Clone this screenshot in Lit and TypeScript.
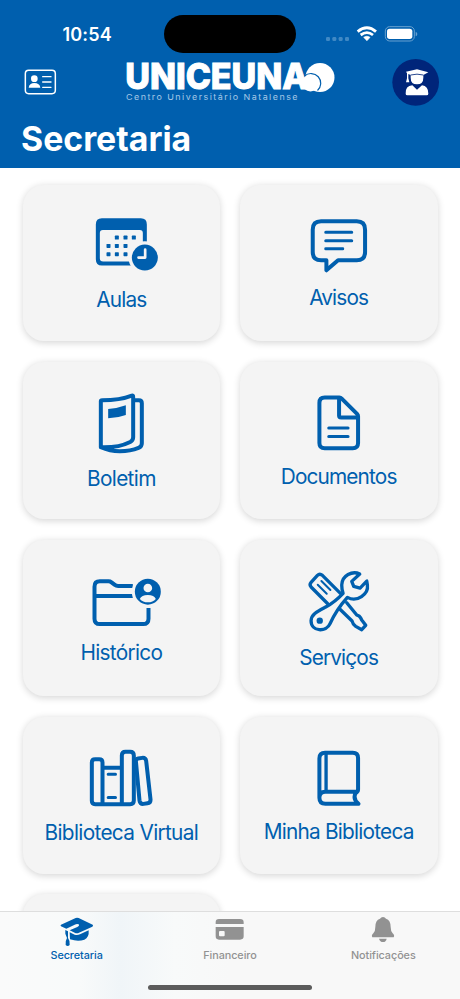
import { LitElement, html, svg, css, nothing } from "lit";
import { customElement, property } from "lit/decorators.js";

const BLUE = "#005fae";

const icons: Record<string, unknown> = {
  aulas: svg`
    <path fill-rule="evenodd" fill="${BLUE}" d="M276 128H393Q411 128 411 147V270H276Q258 270 258 251V147Q258 128 276 128ZM279 163Q270 163 270 172V248Q270 258 280 258H399V172Q399 163 390 163Z"/>
    <g fill="${BLUE}">
      <rect x="315" y="180" width="12" height="12" rx="2"/><rect x="341" y="180" width="12" height="12" rx="2"/><rect x="366" y="180" width="12" height="12" rx="2"/>
      <rect x="290" y="205" width="12" height="12" rx="2"/><rect x="315" y="205" width="12" height="12" rx="2"/><rect x="341" y="205" width="12" height="12" rx="2"/>
      <rect x="290" y="230" width="12" height="12" rx="2"/><rect x="315" y="230" width="12" height="12" rx="2"/><rect x="341" y="230" width="12" height="12" rx="2"/>
    </g>
    <circle cx="405" cy="246" r="49" fill="#f4f4f4"/>
    <circle cx="405" cy="246" r="39" fill="${BLUE}"/>
    <path d="M406 222V246H386" fill="none" stroke="#f4f4f4" stroke-width="8" stroke-linecap="round" stroke-linejoin="round"/>`,
  avisos: svg`
    <g fill="none" stroke="${BLUE}" stroke-linecap="round" stroke-linejoin="round">
      <path stroke-width="12" d="M272 138H379Q404 138 404 163V230Q404 255 379 255H323L288 285V255H272Q247 255 247 230V163Q247 138 272 138Z"/>
      <path stroke-width="9" d="M286 171H364M286 196H364M286 220H337"/>
    </g>`,
  boletim: svg`
    <g fill="none" stroke="${BLUE}" stroke-width="12" stroke-linecap="round" stroke-linejoin="round">
      <path d="M273 275V137Q273 134 277 134Q330 134 366 120Q370 119 370 124V245Q370 254 361 259Q325 277 273 275Q300 287 330 287Q362 287 386 277Q396 273 396 263V143Q396 134 387 134H374"/>
    </g>
    <path d="M295 160Q324 158 348 149V178Q324 187 295 188Z" fill="${BLUE}"/>`,
  documentos: svg`
    <g fill="none" stroke="${BLUE}" stroke-linecap="round" stroke-linejoin="round">
      <path stroke-width="12" d="M283 128H327Q331 128 334 131L380 177Q383 180 383 184V264Q383 280 367 280H283Q267 280 267 264V144Q267 128 283 128ZM326 129V182Q326 188 332 188H382"/>
      <path stroke-width="9" d="M295 219H353M295 245H353"/>
    </g>`,
  historico: svg`
    <g fill="none" stroke="${BLUE}" stroke-width="12">
      <path d="M369 168H325Q319 168 314 164L305 157Q301 154 296 154H270Q254 154 254 170V266Q254 282 270 282H400Q416 282 416 266V234M254 198H369"/>
    </g>
    <circle cx="414" cy="185" r="48" fill="#f4f4f4"/>
    <circle cx="414" cy="185" r="39" fill="${BLUE}"/>
    <circle cx="414" cy="174" r="13" fill="#f4f4f4"/>
    <path d="M390 207Q395 195 414 195Q433 195 438 207Q429 217 414 217Q399 217 390 207Z" fill="#f4f4f4"/>`,
  servicos: svg`
    <g fill="none" stroke="${BLUE}" stroke-width="10" stroke-linejoin="round" stroke-linecap="round">
      <path d="M292 219L242 169Q236 162 242 155L261 134Q268 127 276 134L330 188"/>
      <path stroke-width="6" d="M273 151L300 178M262 162L289 189"/>
      <path d="M349 216L379 253L386 256Q391 261 394 268L406 284L394 297L376 287Q367 281 365 271L328 235"/>
      <path d="M388 130C366 119 335 134 334 163Q334 176 338 188C324 203 306 218 286 229C260 243 243 251 242 270C242 304 288 305 299 279C310 254 324 230 351 200C380 216 415 190 411 163L409 151L389 172L370 167L364 152Z"/>
    </g>
    <circle cx="268" cy="270" r="9.500" fill="${BLUE}"/>`,
  virtual: svg`
    <g fill="none" stroke="${BLUE}" stroke-width="12" stroke-linejoin="round">
      <path d="M278 282H256Q246 282 246 272V157Q246 147 256 147H268Q278 147 278 157V282ZM278 173H336M278 282H336M336 282V136Q336 125 347 125H361Q372 125 372 136V271Q372 282 361 282Z"/>
      <path d="M378 151Q379 146 385 145L397 143Q407 142 409 152L422 267Q423 278 413 279L401 281Q391 282 389 271Z"/>
      <path stroke-width="9" stroke-linecap="round" d="M295 192H317M295 262H317"/>
    </g>`,
  minha: svg`
    <g fill="none" stroke="${BLUE}" stroke-width="12" stroke-linejoin="round" stroke-linecap="round">
      <path d="M267 262V145Q267 128 284 128H367Q383 128 383 144V238Q383 245 376 248Q366 265 384 281H285Q267 281 267 263Q267 245 285 245H376"/>
      <path stroke-width="10" stroke-linecap="butt" d="M287 130V244"/>
    </g>`,
};

interface Tile { icon: string; label: string; box: string; h: number; ls: number; }

const tiles: Tile[] = [
  { icon: "aulas", label: "Aulas", box: "213.5 115.2 240 219", h: 73, ls: -0.85 },
  { icon: "avisos", label: "Avisos", box: "205.8 119.1 240 211.2", h: 70.4, ls: -0.85 },
  { icon: "boletim", label: "Boletim", box: "213.5 100.2 240 233.4", h: 77.8, ls: -0.65 },
  { icon: "documentos", label: "Documentos", box: "205.8 108.3 240 217.2", h: 72.4, ls: -0.85 },
  { icon: "historico", label: "Histórico", box: "213.5 120 240 208.2", h: 69.4, ls: -0.7 },
  { icon: "servicos", label: "Serviços", box: "205.8 102.9 240 242.4", h: 80.8, ls: -0.85 },
  { icon: "virtual", label: "Biblioteca Virtual", box: "213.5 104.4 240 223.8", h: 74.6, ls: -0.67 },
  { icon: "minha", label: "Minha Biblioteca", box: "205.8 107.4 240 217.8", h: 72.6, ls: -0.77 },
];

@customElement("menu-tile")
class MenuTile extends LitElement {
  @property({ attribute: false }) tile?: Tile;
  static styles = css`
    :host { display: flex; flex-direction: column; align-items: center; justify-content: center;
      height: 156.6px; border-radius: 21px; background: #f4f4f4; box-shadow: 0 1.5px 7px rgba(0,0,0,.16); color: #005fae; }
    svg { display: block; flex: none; }
    .label { height: 26px; line-height: 26px; font-size: 20.8px; font-weight: 400; white-space: nowrap; }
  `;
  render() {
    const t = this.tile;
    if (!t) return nothing;
    return html`<svg width="80" height="${t.h}" viewBox="${t.box}">${icons[t.icon]}</svg>
      <div class="label" style="letter-spacing:${t.ls}px">${t.label}</div>`;
  }
}

@customElement("app-header")
class AppHeader extends LitElement {
  static styles = css`
    :host { display: block; flex: none; height: 168px; background: #005fae; color: #fff; }
    svg { display: block; }
    .status { display: grid; grid-template-columns: 164px 132px 164px; height: 54px; padding-top: 15px; box-sizing: border-box; }
    .time { padding-left: 62.5px; line-height: 39px; font-size: 18px; font-weight: 600; letter-spacing: .15px; }
    .island { height: 38px; border-radius: 19px; background: #000; }
    .signals { padding-left: 30px; padding-top: 9px; }
    .nav { display: flex; align-items: center; justify-content: space-between; height: 56px; padding: 0 21px 0 24px; }
    .logo { margin-left: 10px; overflow: visible; }
    h1 { margin: 8px 0 0 21px; font-size: 33.8px; line-height: 42px; font-weight: 700; letter-spacing: 0; }
  `;
  render() {
    return html`
      <div class="status">
        <div class="time">10:54</div>
        <div class="island"></div>
        <div class="signals">
          <svg width="94" height="20" viewBox="288 72 282 60">
            <g fill="#4089c5"><rect x="288" y="111" width="12" height="12" rx="4"/><rect x="307" y="111" width="12" height="12" rx="4"/><rect x="326" y="111" width="12" height="12" rx="4"/><rect x="345" y="111" width="12" height="12" rx="4"/></g>
            <g fill="none" stroke="#fff" stroke-width="8.500"><path d="M383 95Q411 72 438 95"/><path d="M392 105Q411 91 429 105"/></g>
            <path d="M401 112Q411 105 420 112L411 122Z" fill="#fff" stroke="#fff" stroke-width="2" stroke-linejoin="round"/>
            <rect x="466" y="80" width="87" height="43" rx="13" fill="none" stroke="#67a0d0" stroke-width="3"/>
            <path d="M557 95Q562 97 562 102Q562 107 557 109Z" fill="#67a0d0"/>
            <rect x="471" y="86" width="76" height="31" rx="8" fill="#fff"/>
          </svg>
        </div>
      </div>
      <div class="nav">
        <svg width="33" height="26" viewBox="72 208 99 78">
          <rect x="76" y="212" width="90" height="70" rx="10" fill="none" stroke="#fff" stroke-width="4.500"/>
          <circle cx="103" cy="237" r="10" fill="#fff"/>
          <path d="M86 264Q88 250 103 250Q119 250 121 264Z" fill="#fff"/>
          <path d="M128 231H153M128 247H153M128 263H153" stroke="#fff" stroke-width="4" stroke-linecap="round"/>
        </svg>
        <svg class="logo" width="210" height="54" viewBox="125 55 210 54">
          <text x="125.300" y="89" textLength="183" lengthAdjust="spacingAndGlyphs" font-size="35.400" font-weight="800" fill="#fff" stroke="#fff" stroke-width="1">UNICEUNA</text>
          <circle cx="320" cy="77.500" r="14.500" fill="#fff"/>
          <circle cx="310.500" cy="83" r="8.500" fill="#fff"/>
          <path d="M304.500 76A9.200 9.200 0 1 1 317.500 90.500" fill="none" stroke="#005fae" stroke-width="1.200"/>
          <text x="126" y="100" textLength="173" lengthAdjust="spacingAndGlyphs" font-size="8" letter-spacing="1.300" fill="#a5c8e6">Centro Universitário Natalense</text>
        </svg>
        <svg width="47" height="47" viewBox="485 176 141 141">
          <circle cx="556" cy="246" r="70" fill="#00257a"/>
          <path d="M527 214L560 207L594 216L579 224V232Q579 252 560 252Q541 252 541 232V224L534 221V234L537 246H527L530 234V219Z" fill="#fff"/>
          <path d="M541 224Q560 219 579 224" fill="none" stroke="#00257a" stroke-width="2.500"/>
          <path d="M526 280Q525 256 546 255L560 268L575 255Q594 257 594 280Q594 285 589 285H531Q526 285 526 280Z" fill="#fff"/>
        </svg>
      </div>
      <h1>Secretaria</h1>`;
  }
}

@customElement("tab-bar")
class TabBar extends LitElement {
  static styles = css`
    :host { display: block; flex: none; box-sizing: border-box; height: 88px; border-top: 1px solid #dedede;
      background: linear-gradient(90deg, #fafafa 0, #f8fafa 80px, #f0f5f8 120px, #f8fafa 175px, #f8f8f8 230px, #f8f8f8 100%); position: relative; z-index: 1; }
    .tabs { display: grid; grid-template-columns: repeat(3, 1fr); height: 73px; }
    .tab { display: flex; flex-direction: column; align-items: center; padding-top: 5px; box-sizing: border-box; color: #929292; }
    .tab svg { display: block; }
    .tab span { font-size: 10.8px; line-height: 14px; margin-top: 2px; font-weight: 500; letter-spacing: -.05px; }
    .active { color: #005fae; }
    .home { width: 164px; height: 5px; border-radius: 3px; background: #5c5c5c; margin: 0 auto; }
  `;
  render() {
    return html`
      <div class="tabs">
        <div class="tab active">
          <svg width="34" height="30" viewBox="180 147 102 90">
            <g fill="currentColor">
              <path d="M183 170L227 150Q231 149 236 150L278 170Q281 173 277 176L237 194Q231 197 224 194L209 187L232 177Q240 173 236 169Q231 166 224 170L199 182L183 175Q180 172 183 170Z"/>
              <path d="M209 193L224 200Q232 203 240 199L266 187Q268 209 253 215Q234 222 210 214Z"/>
              <path d="M196 186L204 190V210Q210 217 209 231Q203 237 197 231Q196 217 201 210L196 197Z"/>
            </g>
          </svg><span>Secretaria</span>
        </div>
        <div class="tab">
          <svg width="34" height="30" viewBox="640 147 102 90">
            <path fill="currentColor" d="M648 168V163Q648 153 658 153H721Q732 153 732 163V168ZM648 177H732V205Q732 215 721 215H658Q648 215 648 205ZM658 192V202Q658 205 661 205H672Q675 205 675 202V192Q675 189 672 189H661Q658 189 658 192Z" fill-rule="evenodd"/>
          </svg><span>Financeiro</span>
        </div>
        <div class="tab">
          <svg width="34" height="30" viewBox="408 147 102 90">
            <path fill="currentColor" d="M427 208Q423 203 430 196Q436 190 436 177Q436 156 450 152Q453 147 459 147Q465 147 468 152Q482 156 482 177Q482 190 488 196Q495 203 491 208ZM447 212H470Q468 222 459 222Q450 222 447 212Z"/>
          </svg><span>Notificações</span>
        </div>
      </div>
      <div class="home"></div>`;
  }
}

@customElement("app-root")
class AppRoot extends LitElement {
  static styles = css`
    :host { display: flex; flex-direction: column; width: 460px; height: 999px; overflow: hidden; background: #fff;
      font-family: Inter, "Liberation Sans", sans-serif; }
    .content { flex: 1; min-height: 0; overflow: hidden; }
    .grid { display: grid; grid-template-columns: 1fr 1fr; gap: 20.8px 19.6px; padding: 16.9px 22.5px 0 22.5px; }
  `;
  render() {
    return html`
      <app-header></app-header>
      <main class="content"><div class="grid">
        ${tiles.map((t) => html`<menu-tile .tile=${t}></menu-tile>`)}
        <menu-tile></menu-tile>
      </div></main>
      <tab-bar></tab-bar>`;
  }
}
